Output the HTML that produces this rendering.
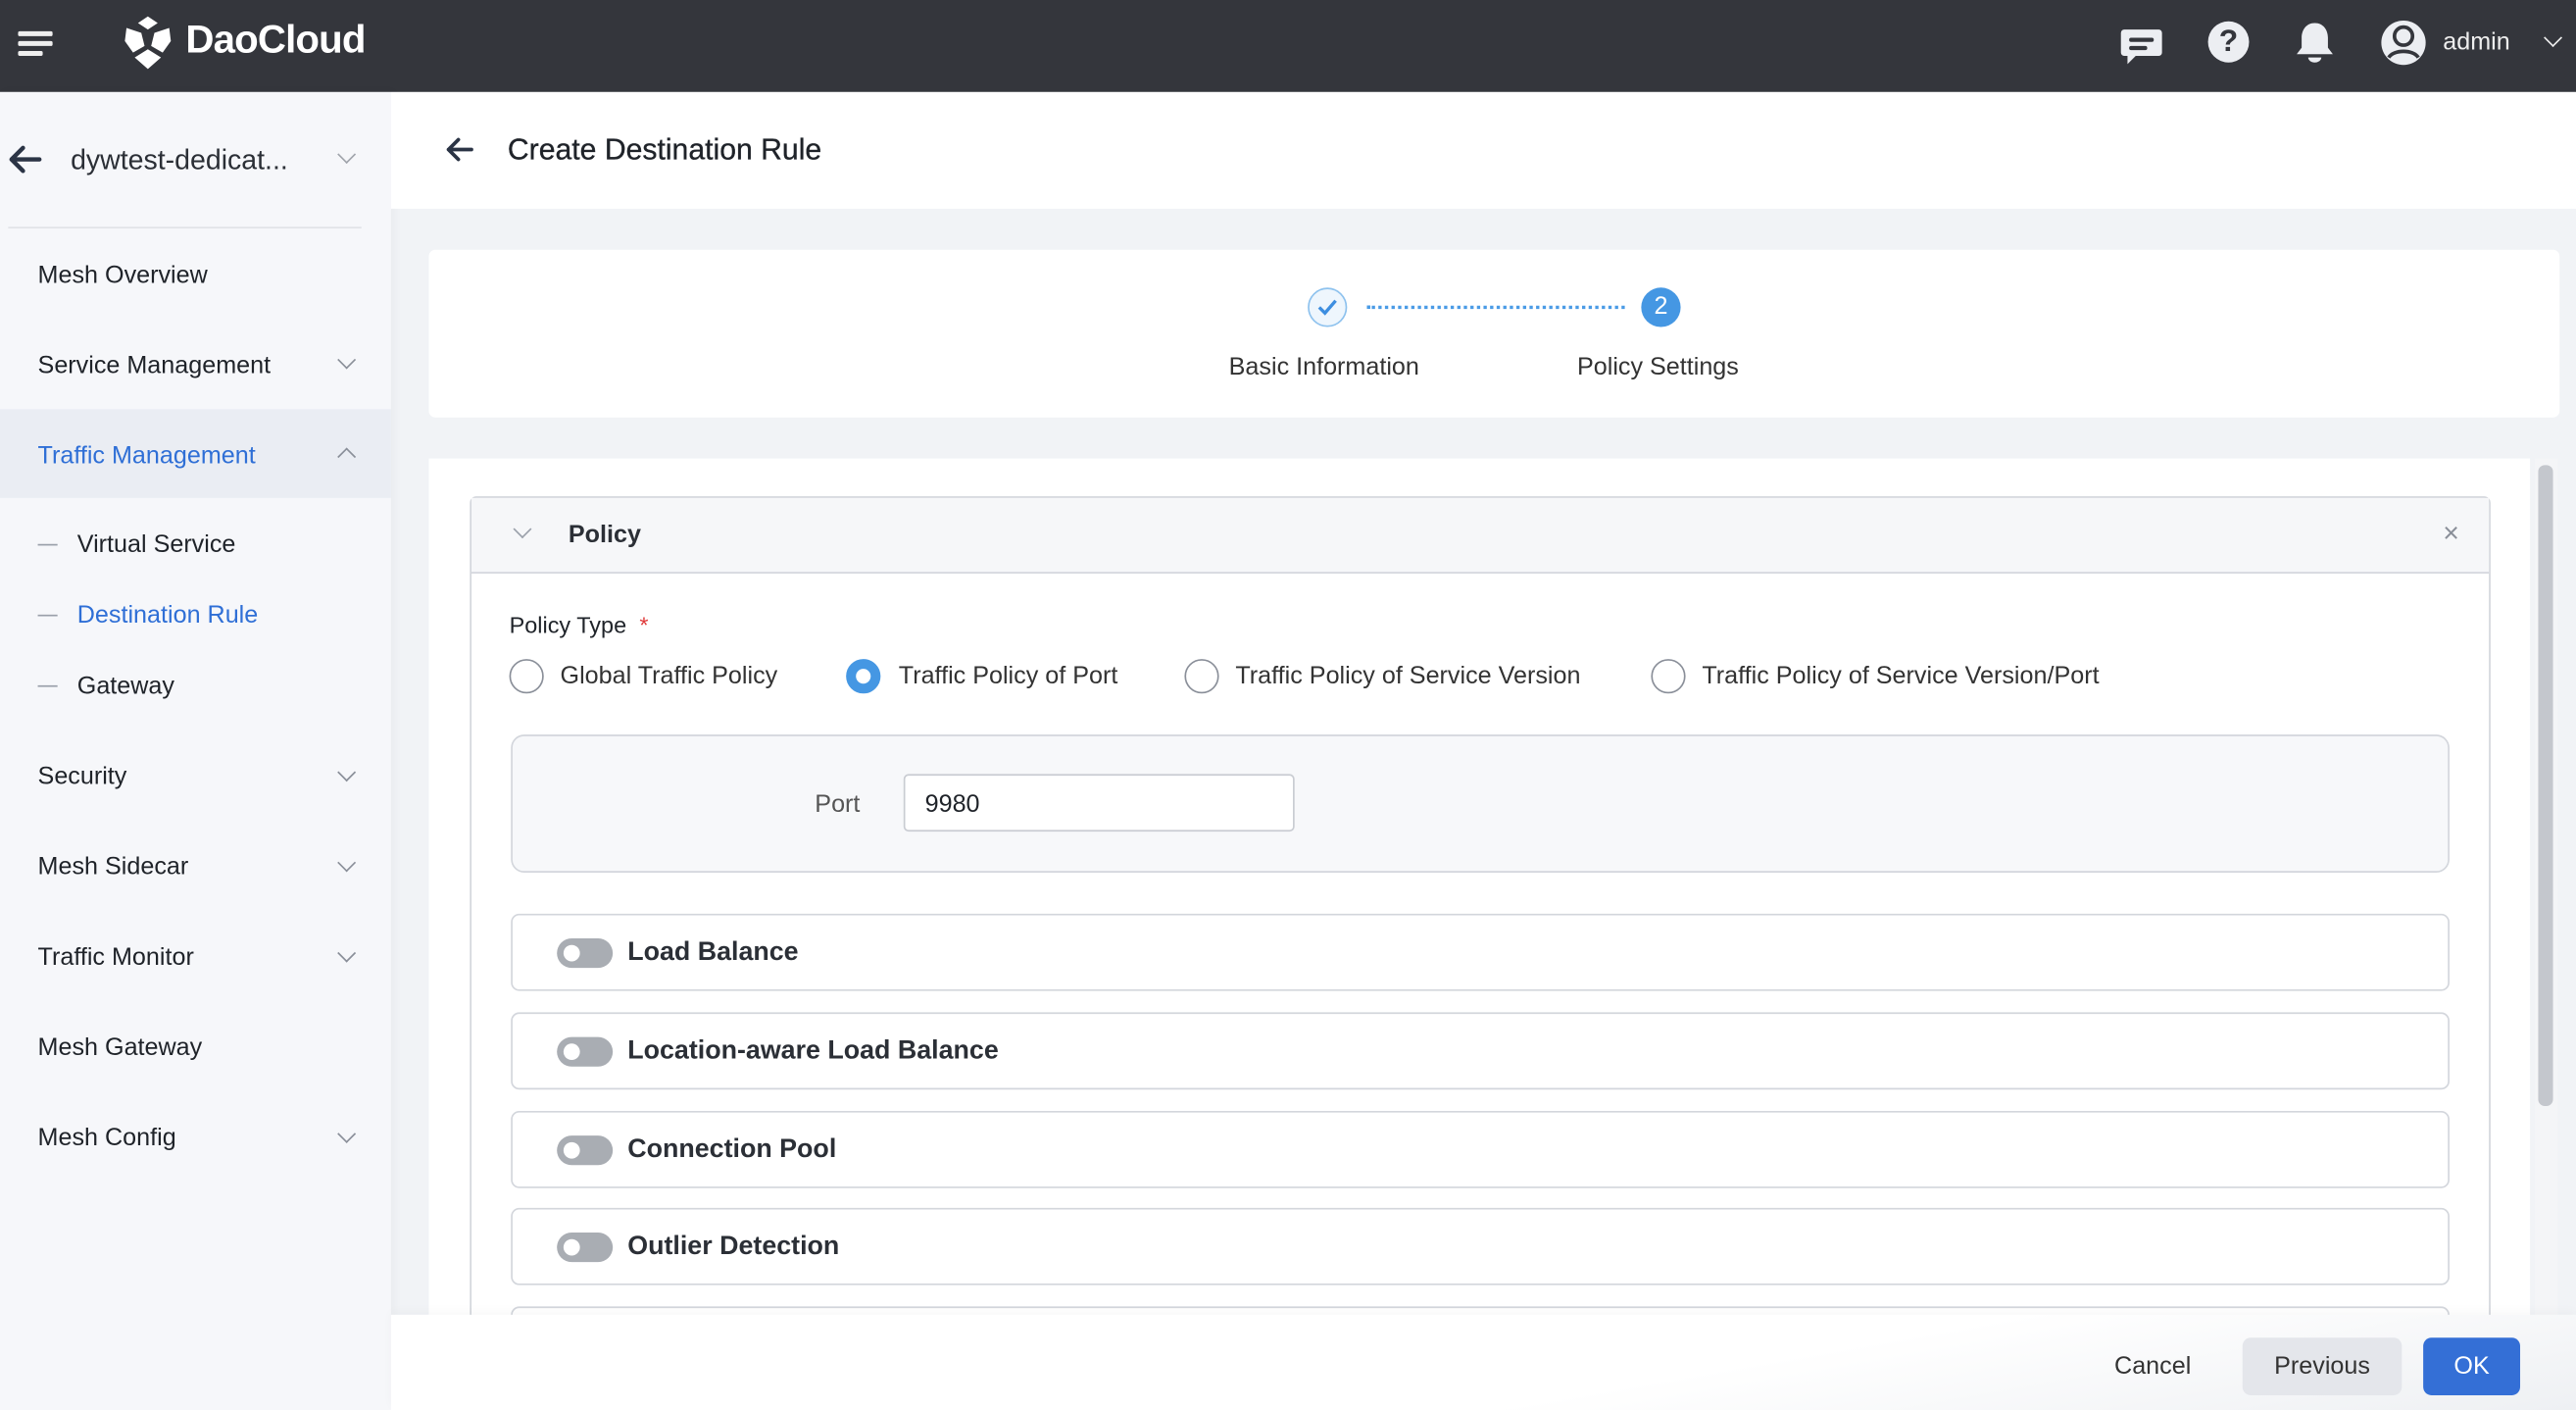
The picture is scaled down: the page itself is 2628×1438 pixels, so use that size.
<!DOCTYPE html>
<html><head><meta charset="utf-8"><style>
*{box-sizing:border-box;margin:0;padding:0}
html,body{width:2628px;height:1438px;overflow:hidden;background:#f1f3f6;font-family:"Liberation Sans",sans-serif;color:#1f2329}
#r{position:absolute;left:0;top:0;width:1568px;height:858px;transform:scale(1.67602);transform-origin:0 0;background:#f1f3f6}
.a{position:absolute}
.hd{left:0;top:0;width:1568px;height:56px;background:#34363c}
.sb{left:0;top:56px;width:238px;height:802px;background:#f6f7fa;box-shadow:2px 0 6px rgba(0,0,0,.04)}
.ni{position:absolute;left:23px;font-size:15px;color:#1f2329;margin-top:1px}
.chev{position:absolute;left:207px;width:8px;height:8px;border-right:1.3px solid #8a8f99;border-bottom:1.3px solid #8a8f99;transform:rotate(45deg)}
.dash{position:absolute;left:23px;width:12px;height:1.3px;background:#9aa0aa}
.card{background:#fff}
.radio{position:absolute;width:21px;height:21px;border:1.5px solid #8a8f99;border-radius:50%;top:401px}
.rl{position:absolute;top:403px;font-size:15px;color:#333}
.sec{position:absolute;left:311px;width:1180px;height:47px;border:1.3px solid #d3d6dc;border-radius:5px;background:#fff}
.tg{position:absolute;left:27px;top:14px;width:34px;height:18px;border-radius:9px;background:#a9adb3}
.tg:after{content:"";position:absolute;left:4px;top:4px;width:10px;height:10px;border-radius:50%;background:#fff}
.st{position:absolute;left:70px;top:14px;font-size:16px;font-weight:bold;color:#2b2f36}
</style></head><body><div id="r">
<div class="a hd"></div>
<div class="a" style="left:11px;top:19px;width:21px;height:2.5px;background:#eee;border-radius:1px"></div>
<div class="a" style="left:11px;top:25px;width:21px;height:2.5px;background:#eee;border-radius:1px"></div>
<div class="a" style="left:11px;top:31px;width:15px;height:2.5px;background:#eee;border-radius:1px"></div>
<svg class="a" style="left:73px;top:8px" width="34" height="36" viewBox="0 0 34 36"><path d="M17 2 L23 6 L17 10 L11 6Z M4 9 L13 12 L15 20 L8 24 L3 17Z M30 9 L21 12 L19 20 L26 24 L31 17Z M9 27 L17 22 L25 27 L17 34Z" fill="#fff"/></svg>
<div class="a" style="left:113px;top:11px;font-size:24px;font-weight:bold;color:#fff;letter-spacing:-.5px">DaoCloud</div>
<svg class="a" style="left:1290px;top:14px" width="28" height="28" viewBox="0 0 28 28"><path d="M3 4h21a2 2 0 0 1 2 2v12a2 2 0 0 1-2 2H10l-5 5v-5H3a2 2 0 0 1-2-2V6a2 2 0 0 1 2-2z" fill="#eceef2"/><rect x="6" y="9" width="15" height="2.5" rx="1.2" fill="#34363c"/><rect x="6" y="14" width="11" height="2.5" rx="1.2" fill="#34363c"/></svg>
<div class="a" style="left:1344px;top:13px;width:25px;height:25px;border-radius:50%;background:#eceef2;color:#34363c;font-weight:bold;font-size:19px;text-align:center;line-height:25px">?</div>
<svg class="a" style="left:1396px;top:12px" width="26" height="28" viewBox="0 0 26 28"><path d="M13 2c5 0 8 4 8 9v6l3 4H2l3-4v-6c0-5 3-9 8-9z" fill="#eceef2"/><path d="M9 23h8a4 3 0 0 1-8 0z" fill="#eceef2"/></svg>
<svg class="a" style="left:1448px;top:11px" width="30" height="30" viewBox="0 0 30 30"><circle cx="15" cy="15" r="13.5" fill="#eceef2"/><circle cx="15" cy="11" r="5.5" fill="none" stroke="#34363c" stroke-width="2.2"/><path d="M6 24c3-5 15-5 18 0" fill="none" stroke="#34363c" stroke-width="2.2"/></svg>
<div class="a" style="left:1487px;top:17px;font-size:15px;color:#eee">admin</div>
<div class="a" style="left:1550px;top:19px;width:8px;height:8px;border-right:1.5px solid #eee;border-bottom:1.5px solid #eee;transform:rotate(45deg)"></div>

<div class="a sb">
<svg class="a" style="left:4px;top:32px" width="22" height="18" viewBox="0 0 22 18"><path d="M10 2L3 9l7 7M3 9h17" fill="none" stroke="#2b3445" stroke-width="2.6" stroke-linecap="round" stroke-linejoin="round"/></svg>
<div class="a" style="left:43px;top:32px;font-size:17px;color:#2b2f36">dywtest-dedicat...</div>
<div class="chev" style="top:34px;border-color:#a0a4ab"></div>
<div class="a" style="left:5px;top:82px;width:215px;height:1px;background:#e1e3e8"></div>
<div class="ni" style="top:102px">Mesh Overview</div>
<div class="ni" style="top:157px">Service Management</div><div class="chev" style="top:159px"></div>
<div class="a" style="left:0;top:193px;width:238px;height:54px;background:#eaedf3"></div>
<div class="ni" style="top:212px;color:#2f6fd6">Traffic Management</div><div class="chev" style="top:218px;transform:rotate(225deg)"></div>
<div class="dash" style="top:275px"></div><div class="ni" style="left:47px;top:266px">Virtual Service</div>
<div class="dash" style="top:318px"></div><div class="ni" style="left:47px;top:309px;color:#2f6fd6">Destination Rule</div>
<div class="dash" style="top:361px"></div><div class="ni" style="left:47px;top:352px">Gateway</div>
<div class="ni" style="top:407px">Security</div><div class="chev" style="top:410px"></div>
<div class="ni" style="top:462px">Mesh Sidecar</div><div class="chev" style="top:465px"></div>
<div class="ni" style="top:517px">Traffic Monitor</div><div class="chev" style="top:520px"></div>
<div class="ni" style="top:572px">Mesh Gateway</div>
<div class="ni" style="top:627px">Mesh Config</div><div class="chev" style="top:630px"></div>
</div>

<div class="a card" style="left:238px;top:56px;width:1330px;height:71px"></div>
<svg class="a" style="left:270px;top:83px" width="20" height="18" viewBox="0 0 20 18"><path d="M9 2L3 8l6 6M3 8h14" fill="none" stroke="#2b3445" stroke-width="2.2" stroke-linecap="round" stroke-linejoin="round"/></svg>
<div class="a" style="left:309px;top:81px;font-size:18px;color:#1f2329;-webkit-text-stroke:.2px #1f2329">Create Destination Rule</div>

<div class="a card" style="left:261px;top:152px;width:1297px;height:102px;border-radius:4px"></div>
<div class="a" style="left:796px;top:175px;width:24px;height:24px;border-radius:50%;border:1.5px solid #8ec2ee;background:#eef6fd"></div>
<svg class="a" style="left:801px;top:181px" width="14" height="12" viewBox="0 0 14 12"><path d="M2 6l3.5 3.5L12 2" fill="none" stroke="#3d8ee0" stroke-width="2"/></svg>
<div class="a" style="left:832px;top:186px;width:157px;border-top:2px dotted #4a9be6"></div>
<div class="a" style="left:999px;top:175px;width:24px;height:24px;border-radius:50%;background:#4597e3;color:#fff;font-size:15px;text-align:center;line-height:24px">2</div>
<div class="a" style="left:748px;top:215px;font-size:15px;color:#333">Basic Information</div>
<div class="a" style="left:960px;top:215px;font-size:15px;color:#333">Policy Settings</div>

<div class="a card" style="left:261px;top:279px;width:1279px;height:579px"></div>
<div class="a" style="left:1543px;top:279px;width:14px;height:579px;background:#f4f5f7"></div>
<div class="a" style="left:1545px;top:283px;width:9px;height:390px;background:#c4c7cd;border-radius:4px"></div>

<div class="a" style="left:286px;top:302px;width:1230px;height:540px;border:1.3px solid #d3d6dc;border-radius:4px"></div>
<div class="a" style="left:287px;top:303px;width:1228px;height:46px;background:#f6f7f9;border-bottom:1.3px solid #d3d6dc"></div>
<div class="a" style="left:314px;top:318px;width:8px;height:8px;border-right:1.3px solid #9aa0aa;border-bottom:1.3px solid #9aa0aa;transform:rotate(45deg)"></div>
<div class="a" style="left:346px;top:317px;font-size:15px;font-weight:bold;color:#2b2f36">Policy</div>
<div class="a" style="left:1487px;top:315px;font-size:17px;color:#8a8f99">×</div>

<div class="a" style="left:310px;top:372px;font-size:14px;color:#1f2329">Policy Type <span style="color:#e03a3a;margin-left:4px">*</span></div>
<div class="radio" style="left:310px"></div><div class="rl" style="left:341px">Global Traffic Policy</div>
<div class="radio" style="left:515px;border:6px solid #4597e3"></div><div class="rl" style="left:547px">Traffic Policy of Port</div>
<div class="radio" style="left:721px"></div><div class="rl" style="left:752px">Traffic Policy of Service Version</div>
<div class="radio" style="left:1005px"></div><div class="rl" style="left:1036px">Traffic Policy of Service Version/Port</div>

<div class="a" style="left:311px;top:447px;width:1180px;height:84px;background:#f7f8fa;border:1.3px solid #d3d6dc;border-radius:8px"></div>
<div class="a" style="left:496px;top:481px;font-size:15px;color:#555">Port</div>
<div class="a" style="left:550px;top:471px;width:238px;height:35px;background:#fff;border:1.3px solid #c9ccd2;border-radius:3px;font-size:15px;color:#1f2329;padding:9px 12px">9980</div>

<div class="sec" style="top:556px"><div class="tg"></div><div class="st">Load Balance</div></div>
<div class="sec" style="top:616px"><div class="tg"></div><div class="st">Location-aware Load Balance</div></div>
<div class="sec" style="top:676px"><div class="tg"></div><div class="st">Connection Pool</div></div>
<div class="sec" style="top:735px"><div class="tg"></div><div class="st">Outlier Detection</div></div>
<div class="sec" style="top:795px"></div>

<div class="a" style="left:238px;top:800px;width:1330px;height:58px;background:linear-gradient(170deg,#fff 60%,#eef0f3);box-shadow:0 -2px 6px rgba(0,0,0,.03)"></div>
<div class="a" style="left:1287px;top:823px;font-size:15px;color:#333">Cancel</div>
<div class="a" style="left:1365px;top:814px;width:97px;height:35px;background:#e4e6eb;border-radius:5px;font-size:15px;color:#333;text-align:center;line-height:36px">Previous</div>
<div class="a" style="left:1475px;top:814px;width:59px;height:35px;background:#346fd6;border-radius:5px;font-size:15px;color:#fff;text-align:center;line-height:36px">OK</div>
</div></body></html>
